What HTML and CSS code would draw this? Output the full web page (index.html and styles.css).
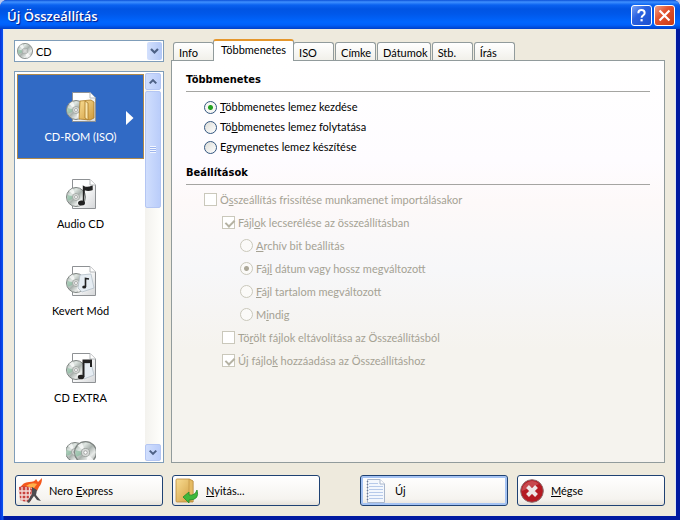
FILE: index.html
```html
<!DOCTYPE html>
<html lang="hu">
<head>
    <meta charset="UTF-8">
    <meta name="viewport" content="width=device-width, initial-scale=1.0">
    <title>Új Összeállítás</title>
    <link rel="stylesheet" href="styles.css">
</head>
<body>
    <!-- shared icon parts -->
    <svg class="defs" width="0" height="0" aria-hidden="true">
        <defs>
            <linearGradient id="discFill" x1="0" y1="0" x2="1" y2="1">
                <stop offset="0" stop-color="#8f9a93"/>
                <stop offset="0.3" stop-color="#dfe6e2"/>
                <stop offset="0.5" stop-color="#a9b1ad"/>
                <stop offset="0.7" stop-color="#e8ebe9"/>
                <stop offset="1" stop-color="#8c918f"/>
            </linearGradient>
            <linearGradient id="paper" x1="0" y1="0" x2="1" y2="1">
                <stop offset="0.4" stop-color="#ffffff"/>
                <stop offset="1" stop-color="#d4d6d8"/>
            </linearGradient>
            <linearGradient id="gold" x1="0" y1="0" x2="1" y2="1">
                <stop offset="0" stop-color="#f9dd93"/>
                <stop offset="1" stop-color="#cf9a3c"/>
            </linearGradient>
            <symbol id="disc" viewBox="0 0 20 20">
                <circle cx="10" cy="10" r="9.5" fill="url(#discFill)" stroke="#7d8380"/>
                <path d="M10 10L3 4A9 9 0 0 1 7 1.500Z M10 10L17 16A9 9 0 0 1 12 19Z" fill="#fff" opacity="0.7"/>
                <path d="M10 10L1.500 8A9 9 0 0 0 2 14Z" fill="#7fb898" opacity="0.6"/>
                <circle cx="10" cy="10" r="3.500" fill="#d9dcda" stroke="#9a9f9c" stroke-width="0.8"/>
                <circle cx="10" cy="10" r="1.500" fill="#fff" stroke="#777" stroke-width="0.5"/>
            </symbol>
            <symbol id="page" viewBox="0 0 30 30">
                <path d="M6.500 0.500H24L29.500 6V29.500H6.500Z" fill="url(#paper)" stroke="#8e9194"/>
                <path d="M24 0.500V6H29.500" fill="#fff" stroke="#b5b8ba"/>
            </symbol>
        </defs>
    </svg>

    <div class="window">
        <header class="titlebar">
            <h1>Új Összeállítás</h1>
            <button type="button" class="caption-btn help" aria-label="Súgó">
                <svg viewBox="0 0 21 21"><path d="M7 8Q7 4.500 10.500 4.500T14 7.700Q14 9.300 12.300 10.300T10.600 13" fill="none" stroke="#fff" stroke-width="2.200"/><rect x="9.400" y="14.500" width="2.400" height="2.500" fill="#fff"/></svg>
            </button>
            <button type="button" class="caption-btn close" aria-label="Bezárás">
                <svg viewBox="0 0 21 21"><path d="M5 5L16 16M16 5L5 16" stroke="#fff" stroke-width="2.400"/></svg>
            </button>
        </header>

        <div class="client">
            <div class="columns">
                <aside class="sidebar">
                    <div class="combo">
                        <svg class="combo-icon" viewBox="0 0 20 20"><use href="#disc"/></svg>
                        <select aria-label="Lemeztípus">
                            <option>CD</option>
                            <option>DVD</option>
                        </select>
                        <svg class="combo-arrow" viewBox="0 0 15 18"><path d="M4 7L7.500 10.500L11 7" fill="none" stroke="#4d6185" stroke-width="2.200"/></svg>
                    </div>

                    <div class="list">
                        <ul class="types">
                            <li class="selected">
                                <svg viewBox="0 0 30 30">
                                    <use href="#page"/>
                                    <use href="#disc" x="0" y="8" width="20" height="20"/>
                                    <path d="M14 9L25 8L28 10V26L24 28L13 27Z" fill="url(#gold)" stroke="#a87a26" stroke-width="0.8"/>
                                    <path d="M19 9V26L22 28V11Z" fill="#fbe7ae" stroke="#a87a26" stroke-width="0.8"/>
                                </svg>
                                <span>CD-ROM (ISO)</span>
                                <svg class="pointer" viewBox="0 0 8 14"><path d="M0 0L7.500 7L0 14Z" fill="#fff"/></svg>
                            </li>
                            <li>
                                <svg viewBox="0 0 30 30">
                                    <use href="#page"/>
                                    <use href="#disc" x="0" y="8" width="20" height="20"/>
                                    <path d="M17.500 24V7.500Q21 9.500 26 7.500V10.500Q22 12 19 10.500" fill="#222" stroke="#222" stroke-width="1.400"/>
                                    <ellipse cx="15.500" cy="24" rx="3.500" ry="2.500" fill="#222"/>
                                </svg>
                                <span>Audio CD</span>
                            </li>
                            <li>
                                <svg viewBox="0 0 30 30">
                                    <use href="#page"/>
                                    <use href="#disc" x="0" y="7" width="20" height="20"/>
                                    <path d="M14 9L25 8L28 22L16 26L12 22Z" fill="#e6edf3" stroke="#b4bfc8" stroke-width="0.8"/>
                                    <path d="M19.500 21V12.500L23 13" fill="none" stroke="#222" stroke-width="1.600"/>
                                    <ellipse cx="18.200" cy="21" rx="2" ry="1.500" fill="#222"/>
                                </svg>
                                <span>Kevert Mód</span>
                            </li>
                            <li>
                                <svg viewBox="0 0 30 30">
                                    <use href="#page"/>
                                    <use href="#disc" x="0" y="7" width="20" height="20"/>
                                    <path d="M17 11L25 10L28 22L18 26Z" fill="#e6edf3" stroke="#b4bfc8" stroke-width="0.8"/>
                                    <path d="M17.500 24V7.500H25V14" fill="none" stroke="#222" stroke-width="2"/>
                                    <path d="M17 7H26V10H17Z" fill="#222"/>
                                    <ellipse cx="15" cy="24" rx="3.200" ry="2.300" fill="#222"/>
                                </svg>
                                <span>CD EXTRA</span>
                            </li>
                            <li>
                                <svg viewBox="0 0 30 30">
                                    <use href="#disc" x="-1" y="2" width="20" height="20"/>
                                    <use href="#disc" x="8" y="1" width="23" height="23"/>
                                </svg>
                            </li>
                        </ul>
                        <div class="scrollbar">
                            <button type="button" aria-label="Fel"><svg viewBox="0 0 15 16"><path d="M4 10L7.500 6.500L11 10" fill="none" stroke="#4d6185" stroke-width="2.200"/></svg></button>
                            <div class="thumb"><i></i></div>
                            <button type="button" class="down" aria-label="Le"><svg viewBox="0 0 15 16"><path d="M4 6L7.500 9.500L11 6" fill="none" stroke="#4d6185" stroke-width="2.200"/></svg></button>
                        </div>
                    </div>
                </aside>

                <main class="main">
                    <div class="tabs" role="tablist">
                        <button type="button" role="tab">Info</button>
                        <button type="button" role="tab" class="active" aria-selected="true">Többmenetes</button>
                        <button type="button" role="tab">ISO</button>
                        <button type="button" role="tab">Címke</button>
                        <button type="button" role="tab">Dátumok</button>
                        <button type="button" role="tab">Stb.</button>
                        <button type="button" role="tab">Írás</button>
                    </div>

                    <form class="panel">
                        <h2>Többmenetes</h2>
                        <div class="options modes">
                            <label><input type="radio" name="mode" checked><span><u>T</u>öbbmenetes lemez kezdése</span></label>
                            <label><input type="radio" name="mode"><span>Tö<u>b</u>bmenetes lemez folytatása</span></label>
                            <label><input type="radio" name="mode"><span>E<u>g</u>ymenetes lemez készítése</span></label>
                        </div>

                        <h2>Beállítások</h2>
                        <div class="options settings">
                            <label><input type="checkbox" disabled><span>Ö<u>s</u>szeállítás frissítése munkamenet importálásakor</span></label>
                            <label class="level-1"><input type="checkbox" checked disabled><span>Fájl<u>o</u>k lecserélése az összeállításban</span></label>
                            <label class="level-2"><input type="radio" name="replace" disabled><span><u>A</u>rchív bit beállítás</span></label>
                            <label class="level-2"><input type="radio" name="replace" checked disabled><span>Fáj<u>l</u> dátum vagy hossz megváltozott</span></label>
                            <label class="level-2"><input type="radio" name="replace" disabled><span><u>F</u>ájl tartalom megváltozott</span></label>
                            <label class="level-2"><input type="radio" name="replace" disabled><span>M<u>i</u>ndig</span></label>
                            <label class="level-1"><input type="checkbox" disabled><span>Tö<u>r</u>ölt fájlok eltávolítása az Összeállításból</span></label>
                            <label class="level-1"><input type="checkbox" checked disabled><span>Új fájlo<u>k</u> hozzáadása az Összeállításhoz</span></label>
                        </div>
                    </form>
                </main>
            </div>

            <footer class="actions">
                <button type="button">
                    <svg viewBox="0 0 26 26">
                        <path d="M3 10Q6 4 12 4Q18 4 19 1L21 4L25 0Q25 6 22 9L20 13L12 9Z" fill="#f4581c"/>
                        <path d="M9 8Q14 4 20 6L17 10Z" fill="#ffb04a"/>
                        <path d="M2 9Q9 7 15 11L14 23Q8 25 3 22Z" fill="#c8413d"/>
                        <path d="M1 13H14M2 17H14M3 21H13M5 9V23M9 9V24M12.500 10V23" stroke="#f3dcd8" stroke-width="1.300"/>
                        <path d="M15 9L20 12L19 17L24 23L20 22L17 18L12 25L10 24L15 16Z" fill="#4c4c50"/>
                    </svg>
                    <span>Nero <u>E</u>xpress</span>
                </button>
                <button type="button">
                    <svg viewBox="0 0 26 26">
                        <path d="M2 2Q2 1 3 1H15L19 3V24H3Q2 24 2 23Z" fill="url(#gold)" stroke="#b98c3d" stroke-width="0.8"/>
                        <path d="M15 1V21L19 24V3Z" fill="#e5bb63" stroke="#b98c3d" stroke-width="0.6"/>
                        <path d="M9 19L15 14V17Q21 18 23 12Q26 22 15 22V25Z" fill="#3fb83b" stroke="#228b2b" stroke-width="0.8"/>
                    </svg>
                    <span><u>N</u>yitás...</span>
                </button>
                <button type="button" class="default">
                    <svg viewBox="0 0 26 26">
                        <path d="M4.500 1.500H17L21.500 6V24.500H4.500Z" fill="#f3f7fd" stroke="#a9b6cb"/>
                        <path d="M17 1.500V6H21.500" fill="#fff" stroke="#a9b6cb"/>
                        <path d="M6 5.500H15M6 8.500H20M6 11.500H20M6 14.500H20M6 17.500H20M6 20.500H20" stroke="#b7caea"/>
                        <path d="M4.500 3V24" stroke="#6b7892" stroke-width="1.500" stroke-dasharray="1 2"/>
                    </svg>
                    <span>Ú<u>j</u></span>
                </button>
                <button type="button">
                    <svg viewBox="0 0 26 26">
                        <circle cx="13" cy="13" r="11.300" fill="#b51a22" stroke="#8d6a6c"/>
                        <path d="M3 13A10 10 0 0 1 20 6Z" fill="#d4676b" opacity="0.6"/>
                        <path d="M8.500 8.500L17.500 17.500M17.500 8.500L8.500 17.500" stroke="#eee6e6" stroke-width="4"/>
                    </svg>
                    <span><u>M</u>égse</span>
                </button>
            </footer>
        </div>
    </div>
</body>
</html>
```
FILE: styles.css
```css
* {
    box-sizing: border-box;
}
body {
    margin: 0;
    background: #b9c8ee;
    font-family: Lato, "DejaVu Sans", sans-serif;
    font-size: 11px;
    line-height: 14px;
    color: #000;
}
button, select {
    font: inherit;
    color: inherit;
}
h1, h2, ul {
    margin: 0;
    padding: 0;
}
.defs {
    position: absolute;
}
.window {
    display: flex;
    flex-direction: column;
    height: 100vh;
    padding: 0 4px 4px 3px;
    border-radius: 7px 7px 0 0;
    background: linear-gradient(to right, #0831d9, #0855f0 3px, #0019a0 4px);
    overflow: hidden;
}

/* title bar */
.titlebar {
    display: flex;
    align-items: center;
    gap: 2px;
    flex: none;
    height: 29px;
    margin: 0 -4px 0 -3px;
    padding: 2px 5px 0 7px;
    background: linear-gradient(#0a50d8 0, #3f90ff 2px, #0a62f0 5px, #0054e3 9px, #0058ea 14px, #0066ff 22px, #0060fa 25px, #0040c8 29px);
}
.titlebar h1 {
    flex: 1;
    font-family: "Open Sans", "Noto Sans", sans-serif;
    font-size: 13px;
    font-weight: 600;
    line-height: 18px;
    color: #fff;
    text-shadow: 1px 1px 1px #0a1883;
}
.caption-btn {
    width: 21px;
    height: 21px;
    padding: 0;
    border: 1px solid #fff;
    border-radius: 3px;
}
.caption-btn svg {
    display: block;
    width: 19px;
    height: 19px;
}
.help {
    background: linear-gradient(135deg, #7aa2f5, #2a62e0 40%, #1b50d0);
}
.close {
    background: linear-gradient(135deg, #f0a088, #e2532f 40%, #c83a14);
}

/* client area */
.client {
    display: flex;
    flex: 1;
    flex-direction: column;
    gap: 12px;
    min-height: 0;
    padding: 11px 10px 10px;
    border: solid #dde4f4;
    border-width: 0 1px 0 1px;
    background: #eeeadd;
}
.columns {
    display: flex;
    flex: 1;
    gap: 7px;
    min-height: 0;
}
.sidebar {
    display: flex;
    flex: none;
    flex-direction: column;
    gap: 9px;
    width: 150px;
}
.combo {
    position: relative;
}
.combo select {
    display: block;
    width: 100%;
    height: 22px;
    padding: 1px 20px 0 21px;
    border: 1px solid #7f9db9;
    border-radius: 0;
    background: #fff;
    appearance: none;
}
.combo svg {
    position: absolute;
    pointer-events: none;
}
.combo-icon {
    top: 3px;
    left: 3px;
    width: 16px;
    height: 16px;
}
.combo-arrow {
    top: 2px;
    right: 2px;
    width: 15px;
    height: 18px;
    border-radius: 2px;
    background: linear-gradient(to right, #d3e0fd, #b3c8f6);
}

/* compilation types */
.list {
    display: flex;
    flex: 1;
    gap: 1px;
    min-height: 0;
    padding: 2px;
    border: 1px solid #7f9db9;
    background: #fff;
}
.types {
    display: flex;
    flex: 1;
    flex-direction: column;
    gap: 2px;
    overflow: hidden;
    list-style: none;
}
.types li {
    position: relative;
    display: flex;
    flex: none;
    flex-direction: column;
    align-items: center;
    gap: 8px;
    height: 85px;
    padding-top: 17px;
    border: 1px solid transparent;
}
.types svg {
    width: 30px;
    height: 30px;
}
.types .selected {
    border-color: #b08a4c;
    background: #316ac5;
    color: #fff;
}
.types .pointer {
    position: absolute;
    top: 36px;
    right: 9px;
    width: 8px;
    height: 14px;
}
.scrollbar {
    display: flex;
    flex: none;
    flex-direction: column;
    gap: 1px;
    width: 16px;
    margin: -1px 0;
    background: linear-gradient(to right, #f3f2ee, #fefefb);
}
.scrollbar button,
.thumb {
    flex: none;
    padding: 0;
    border: 1px solid #b4c6f3;
    border-radius: 2px;
    background: linear-gradient(to right, #d0defd, #bacdfa);
}
.scrollbar button {
    height: 17px;
}
.scrollbar svg {
    display: block;
    width: 14px;
    height: 15px;
}
.scrollbar .down {
    margin-top: auto;
}
.thumb {
    display: flex;
    align-items: center;
    justify-content: center;
    height: 117px;
}
.thumb i {
    width: 6px;
    height: 7px;
    background: repeating-linear-gradient(#f2f6ff 0 1px, #9db5ee 1px 2px);
}

/* tabs */
.main {
    display: flex;
    flex: 1;
    flex-direction: column;
    min-width: 0;
}
.tabs {
    display: flex;
    align-items: flex-end;
    gap: 1px;
    flex: none;
    height: 21px;
    padding-left: 2px;
    margin-top: -1px;
}
.tabs button {
    min-width: 41px;
    height: 18px;
    padding: 2px 2px 0 5px;
    border: 1px solid #919b9c;
    border-bottom: 0;
    border-radius: 3px 3px 0 0;
    background: linear-gradient(#fff, #f1f0ea);
    text-align: left;
    white-space: nowrap;
}
.tabs .active {
    z-index: 1;
    height: 22px;
    margin: 0 -2px -1px;
    padding: 0 7px 2px;
    border-top: 2px solid #e5972d;
    background: #fff;
}
.panel {
    flex: 1;
    min-height: 0;
    padding: 12px 14px;
    border: 1px solid #919b9c;
    background: linear-gradient(#fff 0, #fefcff 25%, #fdf9f9 35%, #f7f7f9 52%, #f5f3ee 72%, #f5f3ee 100%);
}
.panel h2 {
    padding-bottom: 4px;
    border-bottom: 1px solid #a5a5a2;
    font-family: "DejaVu Sans Condensed", "DejaVu Sans", sans-serif;
    font-size: 11px;
    line-height: 14px;
}

/* options */
.options {
    display: flex;
    flex-direction: column;
    padding-left: 18px;
}
.options label {
    display: flex;
    align-items: center;
    gap: 3px;
}
.modes {
    padding-top: 5px;
    padding-bottom: 9px;
}
.modes label {
    height: 20px;
}
.settings {
    padding-top: 3px;
    color: #a5a294;
}
.settings label {
    height: 23px;
}
.options .level-1 {
    margin-left: 18px;
}
.options .level-2 {
    margin-left: 36px;
}
input {
    flex: none;
    width: 13px;
    height: 13px;
    margin: 0;
    border: 1px solid #33567f;
    background: #fff;
    appearance: none;
}
input[type="radio"] {
    border-radius: 50%;
    background: linear-gradient(135deg, #dcdcd7, #fff);
}
input[type="radio"]:checked {
    background: radial-gradient(circle, #21a121 0 2px, #f6f6f4 3px);
}
input:disabled {
    border-color: #cac8bb;
}
input[type="radio"]:disabled {
    background: #fbfaf8;
}
input[type="radio"]:checked:disabled {
    background: radial-gradient(circle, #aca899 0 2px, #fbfaf8 3px);
}
input[type="checkbox"]:checked::before {
    content: "";
    display: block;
    width: 4px;
    height: 7px;
    margin: 1px 0 0 4px;
    border: solid #b5b2a3;
    border-width: 0 2px 2px 0;
    transform: rotate(45deg);
}

/* bottom buttons */
.actions {
    display: flex;
    flex: none;
    gap: 9px;
    padding-left: 1px;
}
.actions button {
    display: flex;
    align-items: center;
    gap: 6px;
    flex: 0 1 148px;
    height: 31px;
    padding: 0 1px;
    border: 1px solid #1f4273;
    border-radius: 3px;
    background: linear-gradient(#fff, #f5f3ef 80%, #e6e2da);
}
.actions svg {
    width: 26px;
    height: 26px;
}
.actions .default {
    margin-left: auto;
    padding: 0 2px;
    box-shadow: inset 0 0 0 2px #a5c3f3;
}
```
